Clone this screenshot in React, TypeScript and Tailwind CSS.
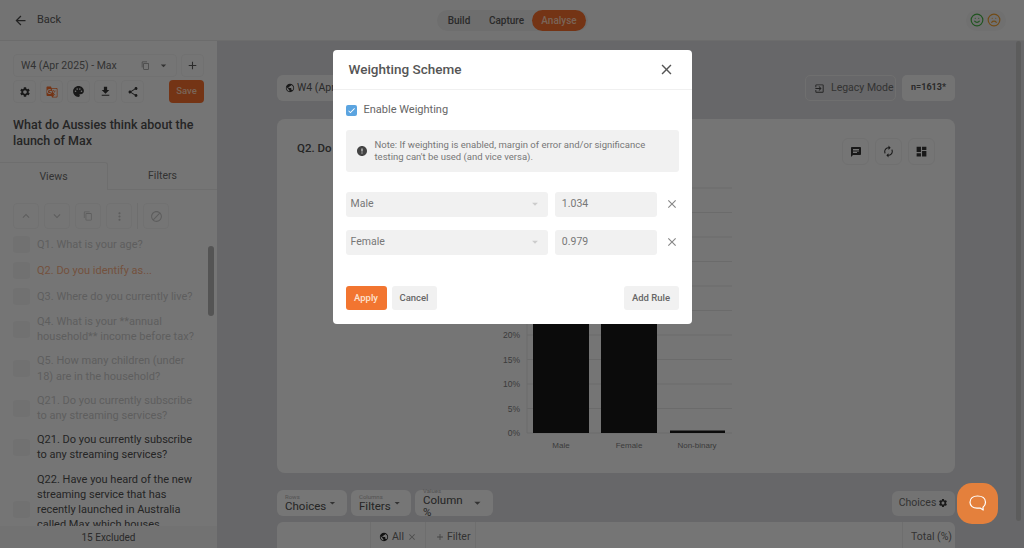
import React from "react";
import { MdArrowBack, MdContentCopy, MdArrowDropDown, MdAdd, MdSettings, MdPalette, MdFileDownload, MdShare, MdGTranslate, MdKeyboardArrowUp, MdKeyboardArrowDown, MdMoreVert, MdBlock, MdPublic, MdExitToApp, MdChat, MdAutorenew, MdDashboard, MdClose, MdCheck, MdError } from "react-icons/md";
import { Smile, Frown } from "lucide-react";

const rows: { t: string; c: string }[] = [
  { t: "Q1. What is your age?", c: "text-[#bdbdbd]" },
  { t: "Q2. Do you identify as...", c: "text-[#e8a47c]" },
  { t: "Q3. Where do you currently live?", c: "text-[#bdbdbd]" },
  { t: "Q4. What is your **annual household** income before tax?", c: "text-[#bdbdbd]" },
  { t: "Q5. How many children (under 18) are in the household?", c: "text-[#bdbdbd]" },
  { t: "Q21. Do you currently subscribe to any streaming services?", c: "text-[#bdbdbd]" },
  { t: "Q21. Do you currently subscribe to any streaming services?", c: "text-[#4a4a4a]" },
  { t: "Q22. Have you heard of the new streaming service that has recently launched in Australia called Max which houses content", c: "text-[#4a4a4a]" },
];

const IconBtn = ({ children, cls = "" }: { children: React.ReactNode; cls?: string }) => (
  <div className={"w-[23px] h-[23px] rounded-[4px] border border-[#e2e2e2] flex items-center justify-center text-[#333] " + cls}>{children}</div>
);

const GhostBtn = ({ children }: { children: React.ReactNode }) => (
  <div className="w-[26px] h-[26px] rounded-[4px] border border-[#e2e2e2] flex items-center justify-center text-[#bbb]">{children}</div>
);

const Pick = ({ label, value, w }: { label: string; value: string; w: string }) => (
  <div className={"h-[26px] rounded-[6px] bg-[#ececec] pl-2 pr-2 flex items-center justify-between " + w}>
    <div className="flex flex-col">
      <span className="text-[6px] leading-[6px] text-[#a8a8a8]">{label}</span>
      <span className="text-[11.5px] leading-[12px] text-[#4a4a4a]">{value}</span>
    </div>
    <MdArrowDropDown size={16} className="text-[#666]" />
  </div>
);

const ticks = [0, 5, 10, 15, 20];

const Chart = () => (
  <svg width="270" height="300" viewBox="0 0 270 300" className="absolute left-[218px] top-[50px]">
    {[50, 45, 40, 35, 30, 25, 20, 15, 10, 5, 0].map((v) => (
      <line key={v} x1="32" x2="237" y1={264 - v * 4.9} y2={264 - v * 4.9} stroke="#d6d6d6" strokeWidth="1" />
    ))}
    <line x1="32" x2="32" y1="19" y2="264" stroke="#d6d6d6" />
    <rect x="38" y="30" width="56" height="234" fill="#161616" />
    <rect x="106" y="30" width="56" height="234" fill="#161616" />
    <rect x="175" y="261.5" width="55" height="2.5" fill="#161616" />
    {ticks.map((v) => (
      <text key={v} x="25" y={267 - v * 4.9} textAnchor="end" fontSize="8.5" fill="#777" fontFamily="Liberation Sans">{v}%</text>
    ))}
    <text x="66" y="279" textAnchor="middle" fontSize="8" fill="#777" fontFamily="Liberation Sans">Male</text>
    <text x="134" y="279" textAnchor="middle" fontSize="8" fill="#777" fontFamily="Liberation Sans">Female</text>
    <text x="202" y="279" textAnchor="middle" fontSize="8" fill="#777" fontFamily="Liberation Sans">Non-binary</text>
  </svg>
);

const WeightRow = ({ name, val }: { name: string; val: string }) => (
  <div className="flex items-center gap-[7px]">
    <div className="w-[203px] h-[25px] rounded-[3px] bg-[#f1f1f1] pl-[5px] pr-[6px] flex items-center justify-between text-[10.5px] text-[#777]">
      {name}
      <MdArrowDropDown size={14} className="text-[#ccc]" />
    </div>
    <div className="w-[102px] h-[25px] rounded-[3px] bg-[#f1f1f1] pl-[7px] flex items-center text-[10.5px] text-[#777]">{val}</div>
    <MdClose size={14} className="ml-[1px] text-[#888]" />
  </div>
);

export default function App() {
  return (
    <div className="relative w-[1024px] h-[548px] overflow-hidden flex flex-col bg-[#cfcfd2] font-['Roboto',sans-serif]">
      <header className="h-[41px] shrink-0 bg-[#e7e7e7] border-b border-[#d8d8d8] flex items-center relative">
        <div className="flex items-center pl-[13px] gap-[9px] text-[#444]">
          <MdArrowBack size={15} />
          <span className="text-[11px] text-[#555]">Back</span>
        </div>
        <div className="absolute left-[437px] top-[10px] h-[21px] w-[151px] rounded-full bg-[#dcdcdc] flex items-center text-[10px] font-medium text-[#555]">
          <span className="w-[44px] text-center ml-[0px]">Build</span>
          <span className="w-[45px] text-center ml-[3px]">Capture</span>
          <span className="ml-[3px] w-[54px] h-[21px] rounded-full bg-[#e8682a] text-[#f3c9b0] flex items-center justify-center">Analyse</span>
        </div>
        <div className="ml-auto mr-[18px] flex items-center gap-[3px] bg-[#e0e0e0] rounded-full px-[4px] h-[21px] w-[40px]">
          <Smile size={14} className="text-[#3fa83f] shrink-0" />
          <Frown size={14} className="text-[#e3962d] shrink-0" />
        </div>
      </header>
      <div className="flex flex-1 min-h-0">
        <aside className="w-[217px] shrink-0 bg-[#ebebeb] flex flex-col relative">
          <div className="px-[13px] pt-[13px]">
            <div className="flex gap-[4px]">
              <div className="w-[164px] h-[23px] rounded-[4px] border border-[#e2e2e2] flex items-center pl-[7px] pr-[6px] text-[10.5px] text-[#666]">
                <span className="flex-1">W4 (Apr 2025) - Max</span>
                <MdContentCopy size={9} className="mr-[7px] text-[#888]" />
                <MdArrowDropDown size={13} className="text-[#666]" />
              </div>
              <IconBtn><MdAdd size={13} className="text-[#555]" /></IconBtn>
            </div>
            <div className="flex gap-[4px] mt-[3px] items-center">
              <IconBtn><MdSettings size={12} /></IconBtn>
              <IconBtn cls="text-[#e8682a]"><MdGTranslate size={12} className="text-[#e8682a]" /></IconBtn>
              <IconBtn><MdPalette size={13} /></IconBtn>
              <IconBtn><MdFileDownload size={13} /></IconBtn>
              <IconBtn><MdShare size={12} /></IconBtn>
              <div className="ml-auto w-[35px] h-[23px] rounded-[4px] bg-[#e8682a] flex items-center justify-center text-[9.5px] font-medium text-[#f3c9b0]">Save</div>
            </div>
            <h1 className="mt-[14px] text-[12.5px] leading-[15.5px] font-medium text-[#4a4a4a]">What do Aussies think about the launch of Max</h1>
          </div>
          <div className="mt-[14px] h-[28px] flex text-[10.5px] text-[#666] shrink-0">
            <div className="w-[108px] flex items-center justify-center border-t border-r border-[#dcdcdc] rounded-tr-[3px]">Views</div>
            <div className="flex-1 flex items-center justify-center border-b border-[#dcdcdc]">Filters</div>
          </div>
          <div className="flex items-center gap-[5px] pl-[13px] mt-[13px]">
            <GhostBtn><MdKeyboardArrowUp size={14} /></GhostBtn>
            <GhostBtn><MdKeyboardArrowDown size={14} /></GhostBtn>
            <GhostBtn><MdContentCopy size={10} /></GhostBtn>
            <GhostBtn><MdMoreVert size={13} /></GhostBtn>
            <div className="w-px h-[26px] bg-[#dcdcdc]" />
            <GhostBtn><MdBlock size={13} /></GhostBtn>
          </div>
          <div className="flex-1 min-h-0 overflow-hidden pl-[13px] pr-[13px] pt-[7px] flex flex-col gap-[9px]">
            {rows.map((r, i) => (
              <div key={i} className="flex items-center gap-[7px] shrink-0">
                <div className="w-[17px] h-[17px] rounded-[3px] bg-[#e3e3e3] shrink-0" />
                <div className={"w-[162px] text-[11px] leading-[15.2px] " + r.c}>{r.t}</div>
              </div>
            ))}
          </div>
          <div className="absolute right-[3px] top-[205px] w-[6px] h-[70px] rounded-full bg-[#a9a9a9]" />
          <div className="h-[22px] shrink-0 bg-[#e4e4e4] flex items-center justify-center text-[10px] text-[#555]">15 Excluded</div>
        </aside>
        <main className="flex-1 min-w-0 relative pl-[60px] pr-[69px] pt-[34px]">
          <div className="flex items-center">
            <div className="h-[26px] w-[120px] rounded-[6px] bg-[#e7e7e7] flex items-center gap-[2px] pl-[8px] text-[10.5px] text-[#555]">
              <MdPublic size={10} className="text-[#333]" />W4 (Apr 2025)
            </div>
            <div className="ml-auto h-[26px] w-[91px] rounded-[5px] border border-[#dedede] flex items-center gap-[6px] pl-[8px] text-[10.5px] text-[#666]">
              <MdExitToApp size={11} className="text-[#444]" />Legacy Mode
            </div>
            <div className="ml-[6px] h-[26px] w-[53px] rounded-[5px] bg-[#e7e7e7] flex items-center justify-center text-[9px] font-bold text-[#555]">n=1613*</div>
          </div>
          <div className="mt-[18px] h-[354px] rounded-[8px] bg-[#ebebeb] relative">
            <div className="absolute left-[20px] top-[21px] text-[11.5px] font-medium text-[#4a4a4a]">Q2. Do you identify as...</div>
            <div className="absolute right-[20px] top-[19px] flex gap-[6px] text-[#333]">
              <div className="w-[27px] h-[27px] rounded-[6px] border border-[#e0e0e0] flex items-center justify-center"><MdChat size={12} /></div>
              <div className="w-[27px] h-[27px] rounded-[6px] border border-[#e0e0e0] flex items-center justify-center"><MdAutorenew size={13} /></div>
              <div className="w-[27px] h-[27px] rounded-[6px] border border-[#e0e0e0] flex items-center justify-center"><MdDashboard size={13} /></div>
            </div>
            <Chart />
          </div>
          <div className="mt-[17px] flex items-center gap-[4px]">
            <Pick label="Rows" value="Choices" w="w-[70px]" />
            <Pick label="Columns" value="Filters" w="w-[60px]" />
            <Pick label="Values" value="Column %" w="w-[78px]" />
            <div className="ml-auto h-[25px] w-[63px] rounded-[6px] bg-[#e6e6e6] flex items-center justify-center gap-[2px] text-[10.5px] text-[#666]">
              Choices<MdSettings size={10} className="text-[#333]" />
            </div>
          </div>
          <div className="mt-[6px] h-[30px] rounded-t-[6px] bg-[#ebebeb] flex items-center text-[10.5px] text-[#666]">
            <div className="w-[94px] h-full border-r border-[#dcdcdc]" />
            <div className="w-[55px] h-full border-r border-[#dcdcdc] flex items-center pl-[8px] gap-[3px]">
              <MdPublic size={10} className="text-[#222]" />All<MdClose size={10} className="text-[#999]" />
            </div>
            <div className="w-[50px] h-full border-r border-[#dcdcdc] flex items-center pl-[9px] gap-[2px]">
              <MdAdd size={10} className="text-[#888]" />Filter
            </div>
            <div className="ml-auto w-[53px] h-full border-l border-[#dcdcdc] flex items-center pl-[8px]">Total (%)</div>
          </div>
          <div className="absolute right-[3px] top-0 w-[5px] h-[480px] rounded-full bg-[#b9b9b9]" />
        </main>
      </div>
      <div className="absolute inset-0 bg-black/50 flex justify-center pt-[50px]">
        <div className="w-[359px] h-[274px] rounded-[4px] bg-white flex flex-col">
          <div className="h-[40px] shrink-0 border-b border-[#f0f0f0] pl-[16px] pr-[17px] flex items-center justify-between">
            <span className="text-[13.5px] font-medium text-[#555]">Weighting Scheme</span>
            <MdClose size={17} className="text-[#555]" />
          </div>
          <div className="px-[13px] pt-[12px] flex flex-col flex-1">
            <div className="flex items-center gap-[7px] text-[11px] text-[#666]">
              <div className="w-[11px] h-[11px] rounded-[2px] bg-[#5ba4e0] flex items-center justify-center"><MdCheck size={9} className="text-white" /></div>
              Enable Weighting
            </div>
            <div className="mt-[11px] h-[42px] rounded-[3px] bg-[#f1f1f1] flex items-center pl-[10px] gap-[7px] text-[9.5px] leading-[11.5px] text-[#777]">
              <MdError size={12} className="text-[#444] shrink-0" />
              <div>Note: If weighting is enabled, margin of error and/or significance<br />testing can't be used (and vice versa).</div>
            </div>
            <div className="mt-[20px] flex flex-col gap-[13px]">
              <WeightRow name="Male" val="1.034" />
              <WeightRow name="Female" val="0.979" />
            </div>
            <div className="mt-auto mb-[14px] flex items-center gap-[5px] text-[9.5px] font-medium">
              <div className="w-[41px] h-[24px] rounded-[3px] bg-[#f27530] text-[#fde3d0] flex items-center justify-center">Apply</div>
              <div className="w-[45px] h-[24px] rounded-[3px] bg-[#f1f1f1] text-[#666] flex items-center justify-center">Cancel</div>
              <div className="ml-auto w-[55px] h-[24px] rounded-[3px] bg-[#f1f1f1] text-[#666] flex items-center justify-center">Add Rule</div>
            </div>
          </div>
        </div>
      </div>
      <div className="absolute left-[957px] top-[483px] w-[41px] h-[41px] rounded-[15px] bg-[#e4803c] flex items-center justify-center">
        <svg width="19" height="19" viewBox="0 0 19 19" fill="none" stroke="#fff" strokeWidth="1.2" strokeLinejoin="round"><path d="M9.5 2C5 2 2 4.2 2 8.2c0 3.8 3 6 7 6h3.5l2.7 1.8-.2-2.8c1.5-1.1 2.5-2.8 2.5-5C17.500 4.200 14 2 9.500 2z" /></svg>
      </div>
    </div>
  );
}
